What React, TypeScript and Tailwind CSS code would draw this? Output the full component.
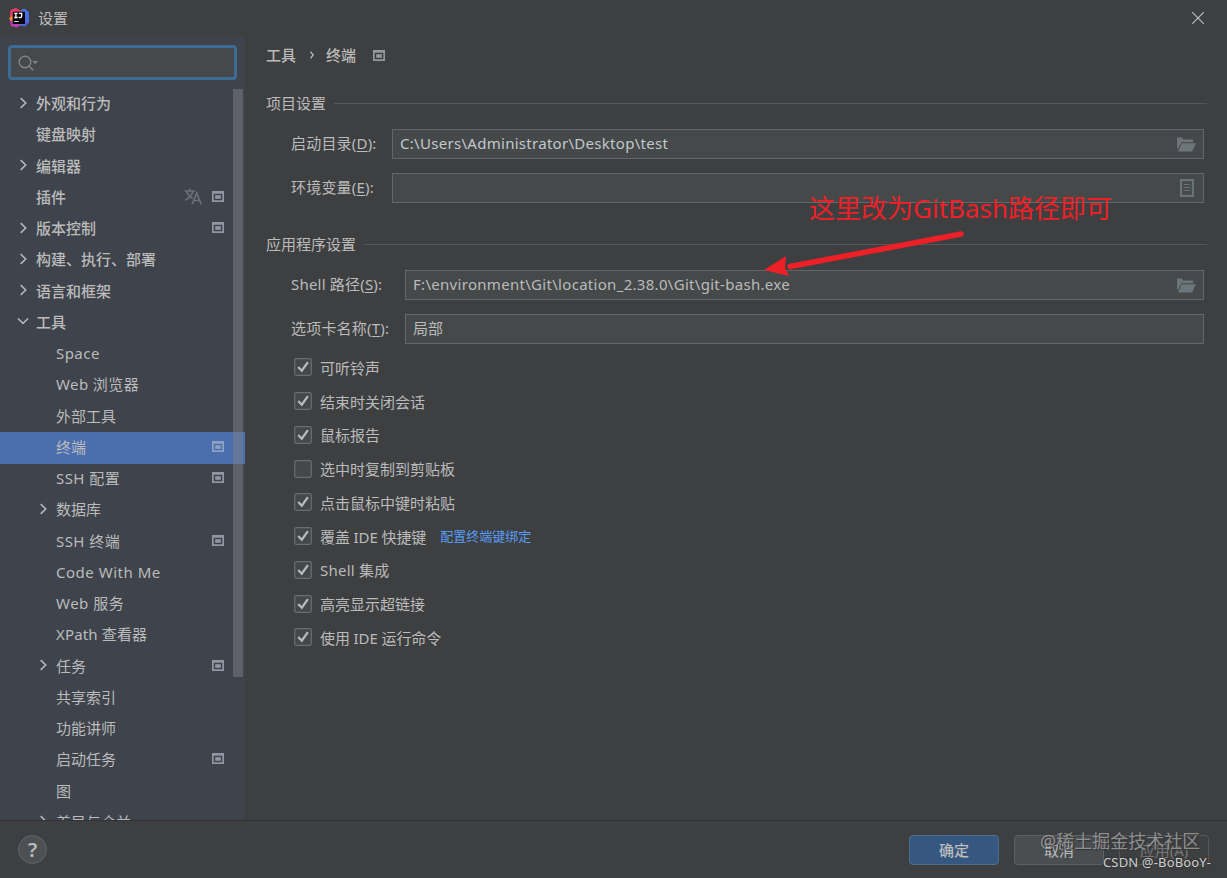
import React from 'react';

type Item = {
  label: string;
  level: 0 | 1;
  arrow?: 'right' | 'down';
  project?: boolean;
  translate?: boolean;
  selected?: boolean;
  tracking?: string;
};

const items: Item[] = [
  { label: '外观和行为', level: 0, arrow: 'right' },
  { label: '键盘映射', level: 0 },
  { label: '编辑器', level: 0, arrow: 'right' },
  { label: '插件', level: 0, project: true, translate: true },
  { label: '版本控制', level: 0, arrow: 'right', project: true },
  { label: '构建、执行、部署', level: 0, arrow: 'right' },
  { label: '语言和框架', level: 0, arrow: 'right' },
  { label: '工具', level: 0, arrow: 'down' },
  { label: 'Space', level: 1, tracking: 'tracking-[0.45px]' },
  { label: 'Web 浏览器', level: 1, tracking: 'tracking-[0.4px]' },
  { label: '外部工具', level: 1 },
  { label: '终端', level: 1, project: true, selected: true },
  { label: 'SSH 配置', level: 1, project: true, tracking: 'tracking-[0.45px]' },
  { label: '数据库', level: 1, arrow: 'right' },
  { label: 'SSH 终端', level: 1, project: true, tracking: 'tracking-[0.45px]' },
  { label: 'Code With Me', level: 1, tracking: 'tracking-[0.52px]' },
  { label: 'Web 服务', level: 1, tracking: 'tracking-[0.5px]' },
  { label: 'XPath 查看器', level: 1, tracking: 'tracking-[0.15px]' },
  { label: '任务', level: 1, arrow: 'right', project: true },
  { label: '共享索引', level: 1 },
  { label: '功能讲师', level: 1 },
  { label: '启动任务', level: 1, project: true },
  { label: '图', level: 1 },
  { label: '差异与合并', level: 1, arrow: 'right' },
];

const options: { label: string; checked: boolean; link?: string; tracking?: string }[] = [
  { label: '可听铃声', checked: true },
  { label: '结束时关闭会话', checked: true },
  { label: '鼠标报告', checked: true },
  { label: '选中时复制到剪贴板', checked: false },
  { label: '点击鼠标中键时粘贴', checked: true },
  { label: '覆盖 IDE 快捷键', checked: true, link: '配置终端键绑定', tracking: 'tracking-[-0.1px]' },
  { label: 'Shell 集成', checked: true, tracking: 'tracking-[0.25px]' },
  { label: '高亮显示超链接', checked: true },
  { label: '使用 IDE 运行命令', checked: true, tracking: 'tracking-[-0.1px]' },
];

function AppLogo() {
  return (
    <svg className="h-5 w-5 shrink-0" viewBox="0 0 20 20">
      <defs>
        <linearGradient id="logoRight" x1="0" y1="0" x2="1" y2="1">
          <stop offset="0" stopColor="#7a5bd0" />
          <stop offset=".4" stopColor="#3f7cf0" />
          <stop offset="1" stopColor="#5a55d8" />
        </linearGradient>
      </defs>
      <path d="M10 3 15.500.5 20 4.500V14.500l-4 4-6-1.500z" fill="url(#logoRight)" />
      <path d="M1.500 2 7 0l6 3.500L8 11 .8 8.500z" fill="#ec3b6c" />
      <path d="M0 10 4 7.500V14L1.500 13z" fill="#f58a2c" />
      <path d="M1 13 5 12l7 5-4 2.500-6-1.500z" fill="#b83fb0" />
      <rect x="3.700" y="3.700" width="12.300" height="12.300" fill="#08080c" />
      <path d="M5.200 5.300h3.400M6.900 5.300v4.200M5.200 9.500h3.400M9.800 5.300h2.900v3q0 1.200-1.300 1.200H9.700" fill="none" stroke="#fff" strokeWidth="1.300" />
      <path d="M5.200 13.500h4.500" stroke="#d8d8d8" strokeWidth="1" />
    </svg>
  );
}

function ProjectIcon({ className = 'text-[#9097a1]' }: { className?: string }) {
  return (
    <svg className={`h-[11px] w-3 shrink-0 ${className}`} viewBox="0 0 12 11">
      <path fillRule="evenodd" fill="currentColor" d="M0 0h12v11H0zM1.700 2.800v6.500h8.600V2.800z" />
      <rect x="3.200" y="4.200" width="5.600" height="3.600" fill="currentColor" />
    </svg>
  );
}

function TranslateIcon() {
  return (
    <svg className="h-[17px] w-[18px] shrink-0 text-[#6a6f78]" viewBox="0 0 18 17" fill="none" stroke="currentColor" strokeWidth="1.700">
      <path d="M.500 3h10.500M5.800 .500V3M2.600 3.200C3.800 6.500 6 9 8.700 10.500M9 3.200C8 7 5 10.500 1 12.300" />
      <path d="M8.200 16.300 12.700 5l4.500 11.300M9.800 12.500h5.800" />
    </svg>
  );
}

function Chevron({ dir }: { dir: 'right' | 'down' }) {
  return (
    <svg className="h-3 w-3 shrink-0 text-[#b4b8bd]" viewBox="0 0 12 12" fill="none" stroke="currentColor" strokeWidth="1.600">
      {dir === 'right' ? <path d="M3.700 1.200 8.700 6l-5 4.800" /> : <path d="M1 3.500 6 8.300l5-4.800" />}
    </svg>
  );
}

function FolderIcon() {
  return (
    <svg className="h-[15px] w-[19px] shrink-0 text-[#6c757a]" viewBox="0 0 19 15" fill="currentColor">
      <path d="M0 .5h5.500v2H16v2.700H4.500L1 11.500H0z" />
      <path d="M4.700 6.200H19L15 14.500H1z" />
    </svg>
  );
}

function ListIcon() {
  return (
    <svg className="h-[18px] w-[14px] shrink-0 text-[#697274]" viewBox="0 0 14 18" fill="none" stroke="currentColor">
      <rect x="1.100" y="1.100" width="11.800" height="15.800" strokeWidth="2.200" />
      <path d="M4 5.500h6M4 8.500h6M4 11.500h6" strokeWidth="1.200" />
    </svg>
  );
}

function TreeRow({ item }: { item: Item }) {
  return (
    <div
      className={`flex w-[245px] shrink-0 items-center pr-[21px] ${item.level === 0 ? 'pl-[17px]' : 'pl-[37px]'} ${item.selected ? '-mb-[0.75px] h-8 bg-[#4b6eaf] pb-[3px]' : 'h-[31.25px] pb-[2px]'}`}
    >
      <div className="mr-[7px] flex w-3 shrink-0">{item.arrow && <Chevron dir={item.arrow} />}</div>
      <span className={`flex-1 pt-px ${item.level === 0 ? 'font-medium' : ''} ${item.tracking ?? ''}`}>{item.label}</span>
      {item.translate && (
        <span className="mr-2.5">
          <TranslateIcon />
        </span>
      )}
      {item.project && <ProjectIcon className={item.selected ? 'text-[#8da3c4]' : 'text-[#9097a1]'} />}
    </div>
  );
}

function SectionTitle({ title }: { title: string }) {
  return (
    <div className="flex h-6 items-center gap-2">
      <span className="pb-px">{title}</span>
      <div className="h-px flex-1 bg-[#55585a]" />
    </div>
  );
}

type FieldProps = {
  label: string;
  mnemonic: string;
  value?: string;
  icon?: React.ReactNode;
  labelWidth: string;
  valueClass?: string;
};

function Field({ label, mnemonic, value, icon, labelWidth, valueClass = '' }: FieldProps) {
  return (
    <div className="flex h-[30px] items-center pl-[25px]">
      <div className={`shrink-0 pb-[2px] tracking-[0.2px] ${labelWidth}`}>
        {label}(<span className="underline decoration-1 underline-offset-2">{mnemonic}</span>):
      </div>
      <div className="flex h-[30px] flex-1 items-center justify-between border border-[#646769] bg-[#45494a] pl-[7px] pr-[7px]">
        <span className={`pb-[2px] ${valueClass}`}>{value}</span>
        {icon}
      </div>
    </div>
  );
}

function Checkbox({ checked }: { checked: boolean }) {
  return (
    <svg className="h-[18px] w-[18px] shrink-0" viewBox="0 0 18 18">
      <rect x=".7" y=".7" width="16.600" height="16.600" rx="1.500" fill="#43494a" stroke="#6b6e70" strokeWidth="1.200" />
      {checked && <path d="M4.200 9 7.800 12.700 13.900 4.200" fill="none" stroke="#b4babd" strokeWidth="2.300" />}
    </svg>
  );
}

export default function App() {
  return (
    <div className="relative flex h-[878px] w-[1227px] flex-col overflow-hidden whitespace-nowrap bg-[#3d3f41] font-['Noto_Sans','Noto_Sans_CJK_SC',sans-serif] text-[15px] leading-5 text-[#bbbbbb]">
      <header className="flex h-[37px] shrink-0 items-center pb-[2px] pl-[9px] pr-[23px]">
        <AppLogo />
        <span className="ml-[9px] flex-1">设置</span>
        <svg className="h-3 w-3" viewBox="0 0 12 12" stroke="#c0c2c3" strokeWidth="1.100">
          <path d="m.3.300 11.400 11.400M11.700.300.300 11.700" />
        </svg>
      </header>

      <div className="flex h-[783px] shrink-0">
        <aside className="relative flex w-[245px] shrink-0 flex-col overflow-hidden bg-[#3e434c]">
          <div className="ml-2 mt-2 flex h-[35px] w-[229px] shrink-0 items-center rounded border-[3px] border-[#3e6b94] bg-[#45494a] pl-[7px]">
            <svg className="h-4 w-[22px]" viewBox="0 0 22 16" fill="none" stroke="#7f8487" strokeWidth="1.400">
              <circle cx="7" cy="7" r="5.800" />
              <path d="m11 11 4.300 4.300" />
              <path d="M14.500 6h5.500l-2.750 3.200z" fill="#7f8487" stroke="none" />
            </svg>
          </div>
          <nav className="mt-2 flex flex-col">
            {items.map((item) => (
              <TreeRow key={item.label} item={item} />
            ))}
          </nav>
          <div className="absolute left-[233px] top-[52px] h-[588px] w-[10px] bg-[#7d8082]/50" />
        </aside>

        <main className="flex flex-1 flex-col pl-[21px] pr-5">
          <div className="mt-[7px] flex h-[23px] items-center pb-px font-medium">
            <span>工具</span>
            <svg className="ml-[13px] mr-[11px] h-2 w-[6px]" viewBox="0 0 6 8" fill="none" stroke="#bbbbbb" strokeWidth="1.300">
              <path d="m1.500.700 2.700 3.300-2.700 3.300" />
            </svg>
            <span>终端</span>
            <span className="ml-[17px]">
              <ProjectIcon className="text-[#92989b]" />
            </span>
          </div>

          <div className="mt-6">
            <SectionTitle title="项目设置" />
          </div>
          <div className="mt-[14px] flex flex-col gap-[14px] pr-[3px]">
            <Field
              label="启动目录"
              mnemonic="D"
              value="C:\Users\Administrator\Desktop\test"
              labelWidth="w-[101px]"
              valueClass="text-[#c3c8cb] tracking-[0.29px]"
              icon={<FolderIcon />}
            />
            <Field
              label="环境变量"
              mnemonic="E"
              labelWidth="w-[101px]"
              icon={
                <span className="mr-[2px]">
                  <ListIcon />
                </span>
              }
            />
          </div>

          <div className="mt-[29px]">
            <SectionTitle title="应用程序设置" />
          </div>
          <div className="mt-[14px] flex flex-col gap-[14px] pr-[3px]">
            <Field
              label="Shell 路径"
              mnemonic="S"
              value="F:\environment\Git\location_2.38.0\Git\git-bash.exe"
              labelWidth="w-[114px]"
              valueClass="tracking-[0.3px]"
              icon={<FolderIcon />}
            />
            <Field label="选项卡名称" mnemonic="T" value="局部" labelWidth="w-[114px]" />
          </div>

          <div className="mt-[6.500px] flex flex-col pl-7">
            {options.map((option) => (
              <div key={option.label} className="flex h-[33.75px] items-center">
                <Checkbox checked={option.checked} />
                <span className={`ml-2 pt-px ${option.tracking ?? ''}`}>{option.label}</span>
                {option.link && <a className="ml-[14px] pb-px text-[13px] text-[#589df6]">{option.link}</a>}
              </div>
            ))}
          </div>
        </main>
      </div>

      <footer className="flex flex-1 items-center border-t border-[#303234] pl-[18px] pr-[18px]">
        <div className="flex h-[29px] w-[29px] items-center justify-center rounded-full border border-[#626668] bg-[#4c5052] text-xl font-semibold">
          ?
        </div>
        <div className="ml-auto flex gap-[15px]">
          <button className="h-[30px] w-[90px] rounded border border-[#4c708c] bg-[#365880] font-medium">确定</button>
          <button className="h-[30px] w-[90px] rounded border border-[#5e6163] bg-[#4a4e50]">取消</button>
          <button className="h-[30px] w-[90px] rounded border border-[#55585a] text-[#777777]">应用(A)</button>
        </div>
      </footer>

      <div className="absolute left-[809px] top-[190px] text-[26px] leading-9 text-[#ee2027]">这里改为GitBash路径即可</div>
      <svg className="absolute left-[760px] top-[225px] h-[60px] w-[210px]" viewBox="0 0 210 60" fill="#ee2027">
        <path d="M201 9 30 41.500" stroke="#ee2027" strokeWidth="5.500" strokeLinecap="round" />
        <path d="M4 45 26 31 25 42.500 29 51z" />
      </svg>
      <div className="absolute left-[1040px] top-[829px] text-[18px] leading-6 text-[#a5a6a7]/80 [text-shadow:1px_1px_1px_#333]">@稀土掘金技术社区</div>
      <div className="absolute left-[1103px] top-[853px] text-[13px] leading-[18px] tracking-[0.15px] text-[#d0d0d0] [text-shadow:0_0_2px_#222]">CSDN @-BoBooY-</div>
    </div>
  );
}
